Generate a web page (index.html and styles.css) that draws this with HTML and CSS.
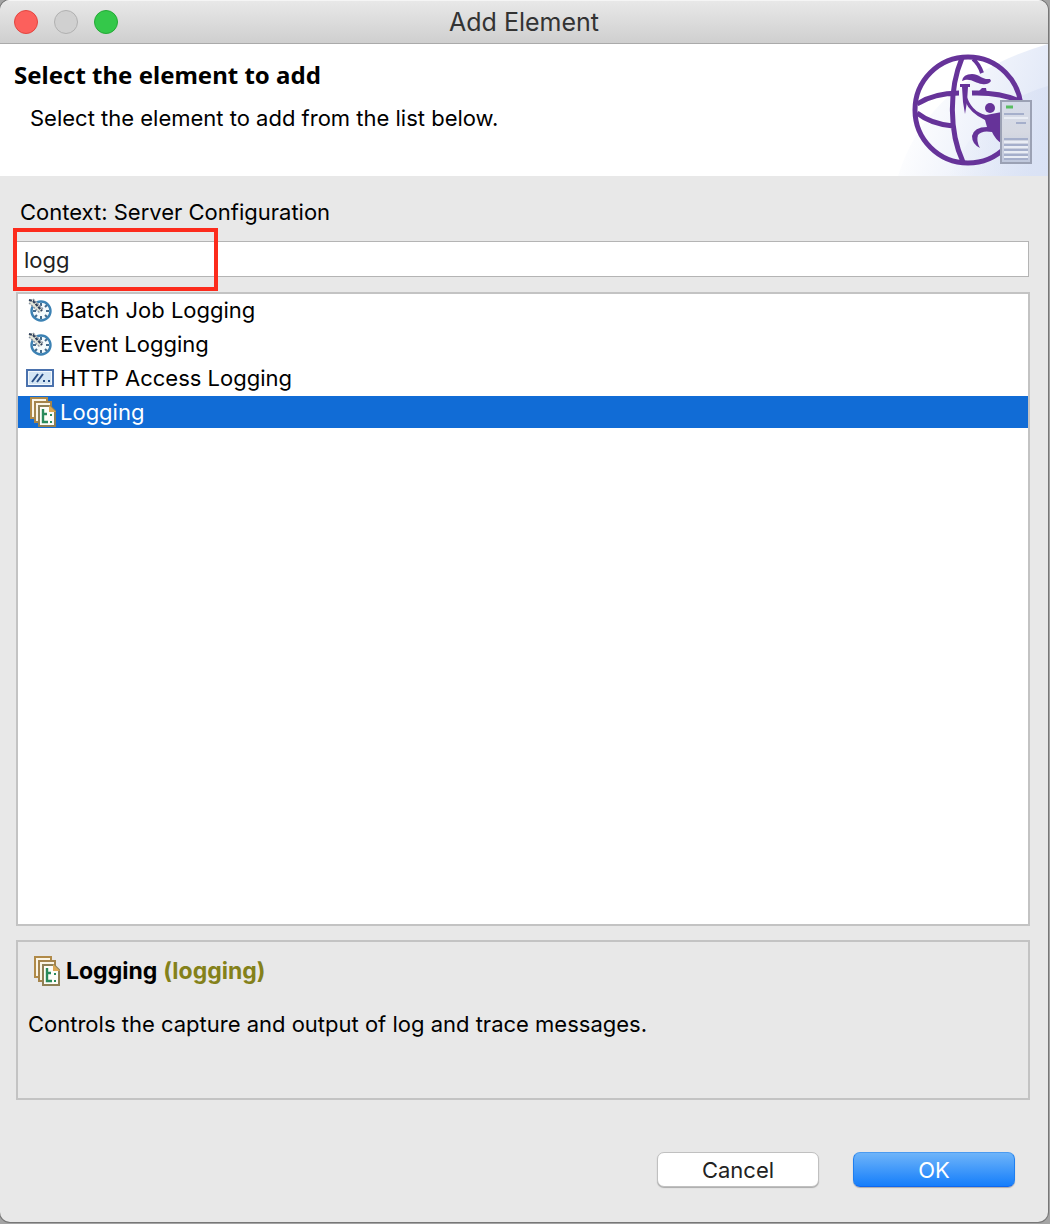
FILE: index.html
```html
<!DOCTYPE html>
<html lang="en">
<head>
<meta charset="utf-8">
<title>Add Element</title>
<link rel="stylesheet" href="styles.css">
</head>
<body>
<svg class="sprite" aria-hidden="true">
  <symbol id="icon-gauge" viewBox="0 0 24 24">
    <circle cx="13" cy="13" r="9.5" fill="#f4fafc" stroke="#3c82b4" stroke-width="2.4"/>
    <path d="M13 5v3M13 18v3M5 13h3M18 13h3M19 7l-2 2M7 19l2-2M17 17l2 2" stroke="#456b8c" stroke-width="2"/>
    <path d="M1 1h5l9 10-3 4L1 5z" fill="#e4e6d8"/>
    <path d="M1 5l11 10M5 1l10 10" stroke="#8a95a5" stroke-width="1.4" stroke-dasharray="2 1"/>
    <path d="M1 2l4 1 9 10" fill="none" stroke="#2f3f5c" stroke-width="2.2" stroke-dasharray="3 1"/>
  </symbol>
  <symbol id="icon-http" viewBox="0 0 28 18">
    <rect x="1" y="1" width="26" height="16" fill="#f3f8fc" stroke="#4a71ad" stroke-width="2"/>
    <rect x="3" y="3" width="22" height="12" fill="#d3e5f4"/>
    <path d="M6 13l6-8M11 13l6-8" stroke="#274d85" stroke-width="2"/>
    <path d="M17 12h2M22 12h2" stroke="#274d85" stroke-width="2"/>
  </symbol>
  <symbol id="icon-log" viewBox="0 0 26 30">
    <path d="M1 1h16v20H1z" fill="#fbf5e6" stroke="#b08a48" stroke-width="2"/>
    <path d="M5 5h16v20H5z" fill="#fbf5e6" stroke="#a5844b" stroke-width="2"/>
    <path d="M9 9h11l5 5v15H9z" fill="#fdfdf8" stroke="#8f8055" stroke-width="2"/>
    <path d="M19 8v7h7z" fill="#dba955"/>
    <path d="M13 12v13h5M12 17h5" fill="none" stroke="#2a8a5a" stroke-width="2.4"/>
    <path d="M20 17h2v2h-2zM20 24h2v2h-2z" fill="#2a8a5a"/>
  </symbol>
</svg>
<main class="dialog">
  <header class="titlebar">
    <div class="lights">
      <button class="light close" aria-label="Close"></button>
      <button class="light minimize" aria-label="Minimize" disabled></button>
      <button class="light expand" aria-label="Zoom"></button>
    </div>
    <h1 class="title">Add Element</h1>
  </header>
  <section class="banner">
    <div class="intro">
      <h2 class="heading">Select the element to add</h2>
      <p class="lead">Select the element to add from the list below.</p>
    </div>
    <svg class="art" viewBox="0 0 160 132" aria-hidden="true">
      <defs>
        <linearGradient id="sky" x1="0" y1="0.3" x2="1" y2="0.6"><stop offset="0.1" stop-color="#fff"/><stop offset="1" stop-color="#e0e7f7"/></linearGradient>
        <linearGradient id="glow" x1="0" y1="0" x2="1" y2="0"><stop offset="0" stop-color="#d5def3" stop-opacity="0"/><stop offset="1" stop-color="#d5def3" stop-opacity=".6"/></linearGradient>
        <linearGradient id="case" x1="0" y1="0" x2="0" y2="1"><stop offset="0" stop-color="#d5dbea"/><stop offset="0.5" stop-color="#d6d9e2"/><stop offset="1" stop-color="#bfc7dc"/></linearGradient>
      </defs>
      <path d="M160 0Q40 35 10 132H160z" fill="url(#sky)"/>
      <path d="M160 42Q95 60 60 132H160z" fill="url(#glow)"/>
      <g fill="none" stroke="#663399" stroke-width="5">
        <circle cx="80" cy="66" r="53"/>
        <path d="M74 14C61 45 61 88 75 118M29 60Q46 49 71 49M29 69Q43 80 65 82M84 49Q115 48 135 59"/>
        <path d="M85 15Q91 20 94 29" stroke-width="4"/>
      </g>
      <g fill="#663399">
        <path d="M74 37Q75 30 84 30C91 30 94 36 102 35L103 37Q100 41 94 40C87 39 82 33 74 37z"/>
        <path d="M72 40h10v3h-2l-1 15-2 12-2-12-1-15h-2z"/>
        <path d="M78 50Q83 68 98 71L114 68V100Q107 95 104 88Q94 86 90 91Q88 97 92 104Q84 100 84 92Q86 83 99 83L97 76Q82 69 77 57z"/>
        <circle cx="102" cy="64" r="5"/>
        <path d="M91 47l3-3h4l1 5h-8z"/>
      </g>
      <rect x="113" y="57" width="30" height="62" fill="url(#case)" stroke="#9ba1b4" stroke-width="2"/>
      <path d="M118 63h7" stroke="#58bd61" stroke-width="3"/>
      <path d="M116 70h20M128 79h10M116 95h24M116 101h24M116 106h24M116 111h24M116 115h24" stroke="#a5afcb" stroke-width="2"/>
      <path d="M116 74h24M116 98h24M116 103h24M116 108h24M116 113h24" stroke="#e9edf5" stroke-width="2"/>
    </svg>
  </section>
  <section class="content">
    <label class="context" for="filter">Context: Server Configuration</label>
    <div class="filter-row">
      <input class="filter" id="filter" type="text" value="logg">
      <span class="highlight"></span>
    </div>
    <ul class="list" role="listbox" aria-label="Elements">
      <li class="item" role="option"><svg class="icon gauge"><use href="#icon-gauge"/></svg>Batch Job Logging</li>
      <li class="item" role="option"><svg class="icon gauge"><use href="#icon-gauge"/></svg>Event Logging</li>
      <li class="item" role="option"><svg class="icon http"><use href="#icon-http"/></svg>HTTP Access Logging</li>
      <li class="item selected" role="option" aria-selected="true"><svg class="icon log"><use href="#icon-log"/></svg>Logging</li>
    </ul>
    <section class="details">
      <h3 class="details-title"><svg class="icon log"><use href="#icon-log"/></svg>Logging <span class="id">(logging)</span></h3>
      <p class="description">Controls the capture and output of log and trace messages.</p>
    </section>
  </section>
  <footer class="actions">
    <button class="button">Cancel</button>
    <button class="button primary">OK</button>
  </footer>
</main>
</body>
</html>
```
FILE: styles.css
```css
* { box-sizing: border-box; }
html { height: 100%; background: #a4a4a4; }
body {
  min-height: 100%;
  margin: 0;
  padding: 0 2px 2px 0;
  display: flex;
  font: 22px/32px Inter, "Liberation Sans", sans-serif;
  color: #000;
}
h1, h2, h3, p, ul { margin: 0; padding: 0; }
.sprite { position: absolute; width: 0; height: 0; }
.dialog {
  flex: 1;
  display: flex;
  flex-direction: column;
  background: #e8e8e8;
  border-radius: 10px;
  box-shadow: 0 0 0 1px #777;
  overflow: hidden;
}
.titlebar {
  height: 44px;
  display: grid;
  grid-template-columns: 1fr auto 1fr;
  align-items: center;
  padding: 0 14px;
  background: linear-gradient(#e8e8e8, #cfcfcf);
  border-top: 1px solid #f5f5f5;
  border-bottom: 1px solid #aaa;
}
.title { font-size: 25px; font-weight: 400; color: #333; }
.lights { display: flex; gap: 16px; }
.light { width: 24px; height: 24px; padding: 0; border: 1px solid; border-radius: 50%; }
.close { background: #fc605c; border-color: #e2453f; }
.minimize { background: #d0d0d0; border-color: #b0b0b0; }
.expand { background: #34c84a; border-color: #24a936; }
.banner { display: flex; justify-content: space-between; height: 132px; background: #fff; }
.intro { padding: 15px 0 0 14px; }
.heading { font: bold 24px/32px "Noto Sans", sans-serif; }
.lead { margin-top: 11px; padding-left: 16px; }
.art { width: 160px; height: 132px; }
.content { flex: 1; display: flex; flex-direction: column; padding: 20px 18px 0 16px; }
.context { padding-left: 4px; }
.filter-row { position: relative; margin: 13px 1px 0 0; }
.filter {
  display: block;
  width: 100%;
  height: 36px;
  padding: 2px 7px 0;
  border: 1px solid #b4b4b4;
  border-radius: 0;
  background: #fff;
  font: inherit;
  color: #222;
  outline: 0;
}
.highlight { position: absolute; left: -3px; top: -13px; width: 205px; height: 63px; border: 4px solid #fc2b1c; }
.list {
  flex: 1;
  display: flex;
  flex-direction: column;
  gap: 2px;
  margin-top: 15px;
  list-style: none;
  background: #fff;
  border: 2px solid #c3c3c3;
}
.item { display: flex; align-items: center; height: 32px; padding-left: 8px; }
.selected { background: #116cd6; color: #fff; }
.icon { flex: none; }
.gauge { width: 24px; height: 24px; margin: 0 8px 0 2px; }
.http { width: 28px; height: 18px; margin-right: 6px; }
.log { width: 26px; height: 30px; margin: 0 4px; }
.details { height: 160px; margin-top: 14px; padding: 12px 10px; border: 2px solid #c3c3c3; }
.details-title { display: flex; align-items: center; padding-left: 2px; font-size: 23px; line-height: 34px; font-weight: 700; }
.details-title .log { margin-right: 6px; }
.id { margin-left: 6px; color: #84811a; }
.description { margin-top: 20px; }
.actions { display: flex; justify-content: flex-end; gap: 34px; padding: 52px 33px 35px; }
.button {
  width: 162px;
  height: 35px;
  padding: 0;
  border: 1px solid #c0c0c0;
  border-radius: 7px;
  background: #fff;
  box-shadow: 0 1px 1px #aaa;
  font: inherit;
  color: #222;
}
.primary { background: linear-gradient(#6eb4f9, #157efb); border-color: #4b9bf0 #1f7ff0 #0f66ee; color: #fff; }
```
